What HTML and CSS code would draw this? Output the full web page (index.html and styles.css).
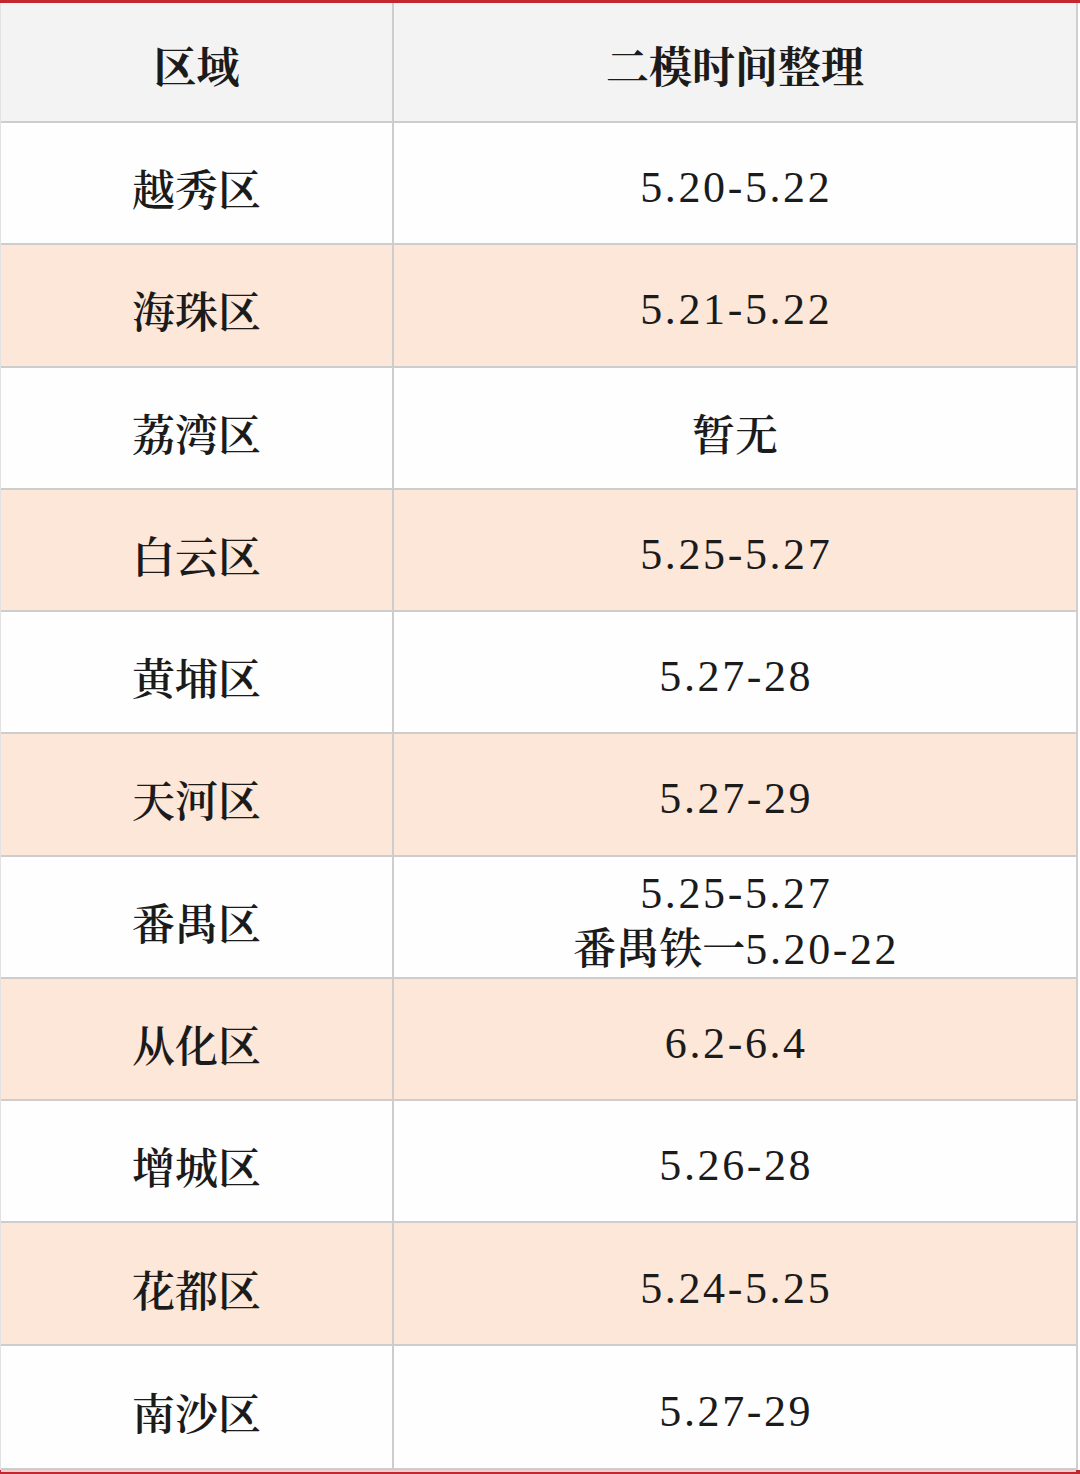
FILE: index.html
```html
<!DOCTYPE html>
<html lang="zh-CN">
<head>
<meta charset="utf-8">
<title>二模时间整理</title>
<link rel="stylesheet" href="styles.css">
</head>
<body>
<div class="sheet">
  <div class="table">
    <div class="row head">
      <div class="cell left">区域</div>
      <div class="cell right">二模时间整理</div>
    </div>
    <div class="row white">
      <div class="cell left">越秀区</div>
      <div class="cell right"><span class="num">5.20-5.22</span></div>
    </div>
    <div class="row peach">
      <div class="cell left">海珠区</div>
      <div class="cell right"><span class="num">5.21-5.22</span></div>
    </div>
    <div class="row white">
      <div class="cell left">荔湾区</div>
      <div class="cell right">暂无</div>
    </div>
    <div class="row peach">
      <div class="cell left">白云区</div>
      <div class="cell right"><span class="num">5.25-5.27</span></div>
    </div>
    <div class="row white">
      <div class="cell left">黄埔区</div>
      <div class="cell right"><span class="num">5.27-28</span></div>
    </div>
    <div class="row peach">
      <div class="cell left">天河区</div>
      <div class="cell right"><span class="num">5.27-29</span></div>
    </div>
    <div class="row white">
      <div class="cell left">番禺区</div>
      <div class="cell right two"><span class="num">5.25-5.27</span><span class="line">番禺铁一<span class="num">5.20-22</span></span></div>
    </div>
    <div class="row peach">
      <div class="cell left">从化区</div>
      <div class="cell right"><span class="num">6.2-6.4</span></div>
    </div>
    <div class="row white">
      <div class="cell left">增城区</div>
      <div class="cell right"><span class="num">5.26-28</span></div>
    </div>
    <div class="row peach">
      <div class="cell left">花都区</div>
      <div class="cell right"><span class="num">5.24-5.25</span></div>
    </div>
    <div class="row white last">
      <div class="cell left">南沙区</div>
      <div class="cell right"><span class="num">5.27-29</span></div>
    </div>
  </div>
</div>
</body>
</html>
```

FILE: styles.css
```css
html, body {
  margin: 0;
  padding: 0;
  background: #ffffff;
}

.sheet {
  width: 1080px;
  height: 1474px;
  display: flex;
  flex-direction: column;
  background: #ffffff;
  border-top: 3px solid #c2272f;
  border-bottom: 4px solid #c2272f;
  box-sizing: border-box;
}

.table {
  width: 1078px;
  border-left: 1px solid #e2e2e2;
  border-right: 2px solid #cfcfcf;
  box-sizing: border-box;
  font-family: "Noto Serif CJK SC", "Liberation Serif", "Noto Sans CJK SC", serif;
  color: #1b1b1b;
}

.row {
  display: grid;
  grid-template-columns: 393px 1fr;
  height: 122.27px;
  box-sizing: border-box;
  border-bottom: 2px solid #cdcdcd;
}

.row.head {
  height: 120px;
  background: #f3f3f3;
}

.row.white {
  background: #fefefe;
}

.row.peach {
  background: #fce7d8;
}

.row.last {
  height: 124.5px;
  border-bottom: 2px solid #cdcdcd;
  box-shadow: 0 2px 0 #f2cfcf;
}

.cell {
  display: flex;
  flex-direction: column;
  align-items: center;
  justify-content: center;
  font-size: 43px;
  font-weight: 600;
  padding-top: 10px;
  box-sizing: border-box;
  line-height: 52px;
  white-space: nowrap;
}

.head .cell {
  font-weight: 700;
  padding-top: 6px;
}

.cell.left {
  border-right: 2px solid #cdcdcd;
}

.num {
  font-family: "Liberation Serif", serif;
  font-size: 44px;
  font-weight: 400;
  letter-spacing: 2.6px;
  margin-right: -2.6px;
}

.two {
  padding-top: 10px;
}

.line {
  display: block;
}
```
